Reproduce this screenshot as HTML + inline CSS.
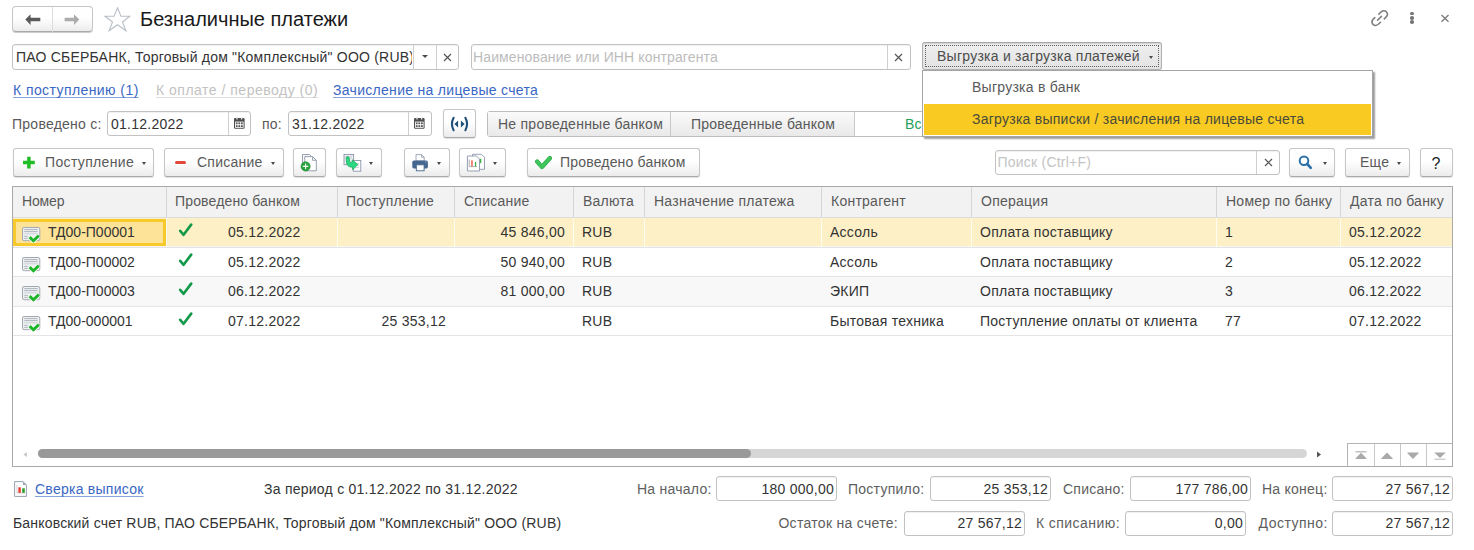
<!DOCTYPE html>
<html><head><meta charset="utf-8">
<style>
*{box-sizing:border-box;margin:0;padding:0}
html,body{width:1474px;height:550px;overflow:hidden;background:#fff}
body{position:relative;font-family:"Liberation Sans",sans-serif;font-size:14px;color:#595959}
.a{position:absolute}
.t{position:absolute;white-space:nowrap;line-height:16px;font-size:14px;letter-spacing:.25px}
.btn{position:absolute;border:1px solid #c6c6c6;border-bottom-color:#a9a9a9;border-radius:3px;background:linear-gradient(#fff 0,#fff 45%,#ececec 100%);box-shadow:0 1px 1px rgba(0,0,0,.12)}
.fld{position:absolute;border:1px solid #c2c2c2;border-radius:3px;background:#fff;box-shadow:inset 0 1px 1px rgba(0,0,0,.06)}

.vsep{position:absolute;top:0;bottom:0;width:1px;background:#cfcfcf}
.arr{position:absolute;width:0;height:0;border-left:2.5px solid transparent;border-right:2.5px solid transparent;border-top:3px solid #4a4a4a}
.lnk{color:#3a66c4;text-decoration:underline;text-decoration-color:#86a4dc;text-decoration-skip-ink:none;text-underline-offset:1.5px;text-decoration-thickness:1.3px}
</style></head><body>

<!-- header -->
<div class="btn" style="left:12px;top:6px;width:81px;height:26px;border-radius:4px;box-shadow:0 1px 0 rgba(0,0,0,.2)"></div>
<div class="a" style="left:52px;top:7px;width:1px;height:25px;background:#dcdcdc"></div>
<svg class="a" style="left:25px;top:14px" width="16" height="12" viewBox="0 0 16 12"><path d="M0.3 5.5 L5.6 0.2 L5.6 3.8 L15.3 3.8 L15.3 7.2 L5.6 7.2 L5.6 10.9 Z" fill="#5a5a5a"/></svg>
<svg class="a" style="left:64px;top:14px" width="16" height="12" viewBox="0 0 16 12"><path d="M15.3 5.5 L10 0.2 L10 3.8 L0.6 3.8 L0.6 7.2 L10 7.2 L10 10.9 Z" fill="#acacac"/></svg>
<svg class="a" style="left:104px;top:7px" width="27" height="25" viewBox="0 0 27 25"><path d="M13.5 0.8 L16.9 9.1 L25.7 9.3 L18.5 15 L21.9 23.8 L13.5 17.8 L5.1 23.8 L8.5 15 L1.1 9.3 L10.1 9.1 Z" fill="none" stroke="#b8bfc7" stroke-width="1.1" stroke-linejoin="miter"/></svg>
<div class="t" style="left:140px;top:8px;font-size:20px;line-height:23px;color:#1a1a1a;letter-spacing:0">Безналичные платежи</div>

<svg class="a" style="left:1370px;top:9px" width="20" height="19" viewBox="0 0 20 19"><g fill="none" stroke="#7e7e7e" stroke-width="1.55" stroke-linecap="round"><path d="M8.9 5.1 L11.2 2.8 Q13.8 0.7 16.3 2.7 Q18.5 5 16.5 7.6 L14.3 9.9"/><path d="M4.8 8.6 L2.7 10.8 Q1 13.3 3 15.4 Q5.3 17.5 8 15.5 L10.5 13.2"/><path d="M7.5 11.2 L11.4 7.4"/></g></svg>
<div class="a" style="left:1410.3px;top:11.8px;width:3.6px;height:3.6px;border-radius:50%;background:#777"></div>
<div class="a" style="left:1410.3px;top:16.1px;width:3.6px;height:3.6px;border-radius:50%;background:#777"></div>
<div class="a" style="left:1410.3px;top:20.4px;width:3.6px;height:3.6px;border-radius:50%;background:#777"></div>
<svg class="a" style="left:1440px;top:14px" width="10" height="9" viewBox="0 0 10 9"><path d="M1.5 1 L8.5 7.8 M8.5 1 L1.5 7.8" stroke="#7a7a7a" stroke-width="1.3"/></svg>

<!-- row 2 -->
<div class="fld" style="left:12px;top:44px;width:447px;height:26px"></div>
<div class="t" style="left:16px;top:49px;color:#333;width:396px;overflow:hidden;letter-spacing:.21px">ПАО СБЕРБАНК, Торговый дом "Комплексный" ООО (RUB)</div>
<div class="a" style="left:413px;top:45px;width:1px;height:24px;background:#cfcfcf"></div>
<div class="a" style="left:436px;top:45px;width:1px;height:24px;background:#cfcfcf"></div>
<div class="arr" style="left:422px;top:55px;border-left-width:3px;border-right-width:3px;border-top-width:3.5px"></div>
<svg class="a" style="left:443px;top:53px" width="9" height="9" viewBox="0 0 9 9"><path d="M1 1 L8 8 M8 1 L1 8" stroke="#555" stroke-width="1.2"/></svg>

<div class="fld" style="left:471px;top:44px;width:440px;height:26px"></div>
<div class="t" style="left:473px;top:49px;color:#bcbcbc;letter-spacing:.12px">Наименование или ИНН контрагента</div>
<div class="a" style="left:887px;top:45px;width:1px;height:24px;background:#cfcfcf"></div>
<svg class="a" style="left:894px;top:53px" width="9" height="9" viewBox="0 0 9 9"><path d="M1 1 L8 8 M8 1 L1 8" stroke="#555" stroke-width="1.2"/></svg>

<div class="a" style="left:922px;top:42px;width:240px;height:28px;border:1px solid #b0b0b0;border-top-color:#a8a8a8;border-radius:3px;background:linear-gradient(#efefef,#e3e3e3);box-shadow:inset 0 1px 1px rgba(0,0,0,.12)"></div>
<div class="a" style="left:925px;top:45px;width:234px;height:22px;border:1px dotted #606060"></div>
<div class="t" style="left:937px;top:48px;color:#4d4d4d">Выгрузка и загрузка платежей</div>
<div class="arr" style="left:1149px;top:56px"></div>

<!-- links -->
<div class="t lnk" style="left:13px;top:82px;letter-spacing:.42px">К поступлению (1)</div>
<div class="t" style="left:156px;top:82px;letter-spacing:.5px;color:#c2c2c2;text-decoration:underline;text-decoration-color:#dcdcdc;text-decoration-skip-ink:none;text-underline-offset:1.5px">К оплате / переводу (0)</div>
<div class="t lnk" style="left:333px;top:82px;letter-spacing:.3px">Зачисление на лицевые счета</div>

<!-- dates row -->
<div class="t" style="left:12px;top:116px">Проведено с:</div>
<div class="fld" style="left:107px;top:111px;width:144px;height:25px"></div>
<div class="t" style="left:111px;top:116px;color:#333">01.12.2022</div>
<div class="a" style="left:228px;top:112px;width:1px;height:23px;background:#cfcfcf"></div>
<svg class="a" style="left:234px;top:117px" width="11" height="12" viewBox="0 0 11 12"><rect x="0" y="1" width="10.6" height="10.8" rx="1.2" fill="#4d4d4d"/><rect x="1" y="4.6" width="8.6" height="6.2" fill="#fff"/><g fill="#555"><rect x="1.8" y="5.4" width="1.8" height="1.8"/><rect x="4.4" y="5.4" width="1.8" height="1.8"/><rect x="7" y="5.4" width="1.8" height="1.8"/><rect x="1.8" y="8.2" width="1.8" height="1.8"/><rect x="4.4" y="8.2" width="1.8" height="1.8"/><rect x="7" y="8.2" width="1.8" height="1.8"/></g><rect x="2.3" y="0" width="1.4" height="2.6" rx="0.6" fill="#e6e6e6"/><rect x="6.9" y="0" width="1.4" height="2.6" rx="0.6" fill="#e6e6e6"/></svg>
<div class="t" style="left:262px;top:116px">по:</div>
<div class="fld" style="left:288px;top:111px;width:144px;height:25px"></div>
<div class="t" style="left:292px;top:116px;color:#333">31.12.2022</div>
<div class="a" style="left:408px;top:112px;width:1px;height:23px;background:#cfcfcf"></div>
<svg class="a" style="left:414px;top:117px" width="11" height="12" viewBox="0 0 11 12"><rect x="0" y="1" width="10.6" height="10.8" rx="1.2" fill="#4d4d4d"/><rect x="1" y="4.6" width="8.6" height="6.2" fill="#fff"/><g fill="#555"><rect x="1.8" y="5.4" width="1.8" height="1.8"/><rect x="4.4" y="5.4" width="1.8" height="1.8"/><rect x="7" y="5.4" width="1.8" height="1.8"/><rect x="1.8" y="8.2" width="1.8" height="1.8"/><rect x="4.4" y="8.2" width="1.8" height="1.8"/><rect x="7" y="8.2" width="1.8" height="1.8"/></g><rect x="2.3" y="0" width="1.4" height="2.6" rx="0.6" fill="#e6e6e6"/><rect x="6.9" y="0" width="1.4" height="2.6" rx="0.6" fill="#e6e6e6"/></svg>
<div class="btn" style="left:443px;top:109px;width:33px;height:29px"></div>
<svg class="a" style="left:449px;top:116px" width="21" height="16" viewBox="0 0 21 16"><g fill="none" stroke="#1d4f7a" stroke-width="2.1" stroke-linecap="round"><path d="M4.6 1.8 Q1.3 8 4.6 14.2"/><path d="M16.4 1.8 Q19.7 8 16.4 14.2"/></g><path d="M5.4 8 L9.1 4.4 L9.1 11.6 Z M15.6 8 L11.9 4.4 L11.9 11.6 Z" fill="#1d4f7a"/></svg>

<div class="a" style="left:487px;top:111px;width:440px;height:26px;border:1px solid #bdbdbd;border-radius:3px;background:#fff"></div>
<div class="a" style="left:488px;top:112px;width:182px;height:24px;background:linear-gradient(#fafafa,#e9e9e9)"></div>
<div class="a" style="left:670px;top:112px;width:1px;height:24px;background:#c8c8c8"></div>
<div class="a" style="left:671px;top:112px;width:183px;height:24px;background:linear-gradient(#fafafa,#e9e9e9)"></div>
<div class="a" style="left:854px;top:112px;width:1px;height:24px;background:#c8c8c8"></div>
<div class="t" style="left:498px;top:116px">Не проведенные банком</div>
<div class="t" style="left:691px;top:116px;letter-spacing:.2px">Проведенные банком</div>
<div class="t" style="left:905px;top:116px;color:#26a05a">Все</div>

<!-- dropdown menu -->
<div class="a" style="left:922px;top:70px;width:451px;height:67px;border:1px solid #a4a4a4;background:#fff;box-shadow:2px 2px 1.5px rgba(0,0,0,.38)"></div>
<div class="a" style="left:924px;top:104px;width:447px;height:31px;background:#f8ca22"></div>
<div class="t" style="left:972px;top:79px">Выгрузка в банк</div>
<div class="t" style="left:972px;top:111px;color:#4a4a3a">Загрузка выписки / зачисления на лицевые счета</div>

<!-- toolbar -->
<div class="btn" style="left:13px;top:148px;width:141px;height:29px"></div>
<svg class="a" style="left:22px;top:156px" width="14" height="14" viewBox="0 0 14 14"><path d="M5.15 0.7 H8.65 V4.85 H12.8 V8.35 H8.65 V12.6 H5.15 V8.35 H1 V4.85 H5.15 Z" fill="#20bd26"/></svg>
<div class="t" style="left:45px;top:154px;letter-spacing:.35px">Поступление</div>
<div class="arr" style="left:142px;top:162px"></div>

<div class="btn" style="left:164px;top:148px;width:120px;height:29px"></div>
<div class="a" style="left:175px;top:161px;width:11px;height:3px;background:#e2473b;border-radius:1.5px"></div>
<div class="t" style="left:197px;top:154px">Списание</div>
<div class="arr" style="left:271px;top:162px"></div>

<div class="btn" style="left:293px;top:148px;width:33px;height:29px"></div>
<svg class="a" style="left:300px;top:153px" width="19" height="19" viewBox="0 0 19 19"><path d="M2.5 1.5 H9.5 L11.5 3.5 V14 H2.5 Z" fill="#fafafa" stroke="#8a96a8" stroke-width="0.9"/><path d="M4.8 3.6 H12.6 L16.3 7.3 V17.8 H4.8 Z" fill="#fff" stroke="#8a96a8" stroke-width="0.9"/><path d="M12.6 3.6 V7.3 H16.3" fill="none" stroke="#8a96a8" stroke-width="0.9"/><circle cx="5.6" cy="13.4" r="4.6" fill="#26a43c" stroke="#1e8a34" stroke-width="0.6"/><path d="M5.6 10.6 V16.2 M2.8 13.4 H8.4" stroke="#fff" stroke-width="1.1"/></svg>

<div class="btn" style="left:336px;top:148px;width:46px;height:29px"></div>
<svg class="a" style="left:342px;top:153px" width="21" height="19" viewBox="0 0 21 19"><rect x="2" y="1.5" width="9.6" height="10.2" fill="#eef0f4" stroke="#8a96a8" stroke-width="0.9"/><path d="M3.5 3.5 H10 M3.5 5.2 H10" stroke="#c9ced8" stroke-width="0.9"/><rect x="11.3" y="7.5" width="7.5" height="10.7" fill="#fff" stroke="#8a96a8" stroke-width="0.9"/><path d="M13 10.5 H17 M13 12.5 H17 M13 14.5 H17" stroke="#c9ced8" stroke-width="0.8"/><path d="M4.2 4.2 Q6.2 2.8 7.2 4.6 L7.6 8.2 Q8 9.4 9.4 9.4 L10.2 9.4 L10.2 6.8 L15.8 11.6 L10.6 16.8 L10.6 14.2 L9.6 14.2 Q5 14 4.4 9 Z" fill="#2bd884" stroke="#1aa552" stroke-width="0.7"/></svg>
<div class="arr" style="left:369px;top:162px"></div>

<div class="btn" style="left:404px;top:148px;width:46px;height:29px"></div>
<svg class="a" style="left:411px;top:154px" width="18" height="18" viewBox="0 0 18 18"><path d="M5 0.6 H10.6 L13.2 3.2 V7 H5 Z" fill="#fff" stroke="#8a96a8" stroke-width="0.8"/><path d="M10.6 0.6 V3.2 H13.2" fill="none" stroke="#8a96a8" stroke-width="0.8"/><rect x="1.3" y="6.6" width="15.6" height="7.8" rx="1.6" fill="#45678f"/><rect x="14" y="7.6" width="1.6" height="0.8" fill="#a9bdd4"/><rect x="5.3" y="10.8" width="7.8" height="6" fill="#fff" stroke="#45678f" stroke-width="0.9"/></svg>
<div class="arr" style="left:437px;top:162px"></div>

<div class="btn" style="left:459px;top:148px;width:47px;height:29px"></div>
<svg class="a" style="left:466px;top:153px" width="20" height="19" viewBox="0 0 20 19"><path d="M6.5 1.3 H15.5 L18.5 4.3 V16.3 H6.5 Z" fill="#fff" stroke="#8a96a8" stroke-width="0.9"/><path d="M1.4 3 H10.5 L13.5 6 V18 H1.4 Z" fill="#fff" stroke="#8a96a8" stroke-width="0.9"/><path d="M3.2 6.5 V13.6 H11" fill="none" stroke="#9a9a9a" stroke-width="0.8"/><rect x="5.3" y="7.3" width="1.3" height="6" fill="#ea4a3a"/><rect x="8.9" y="9" width="1.3" height="4.3" fill="#3cb04a"/><rect x="14" y="5.8" width="1.3" height="4.3" fill="#3cb04a"/></svg>
<div class="arr" style="left:493px;top:162px"></div>

<div class="btn" style="left:527px;top:148px;width:173px;height:29px"></div>
<svg class="a" style="left:535px;top:156px" width="17" height="14" viewBox="0 0 17 14"><path d="M2.2 5.6 L6.9 10.9 L14.8 2.2" fill="none" stroke="#2fa84b" stroke-width="4.4" stroke-linecap="round" stroke-linejoin="round"/><path d="M2.2 5.6 L6.9 10.9 L14.8 2.2" fill="none" stroke="#3dc65b" stroke-width="3.2" stroke-linecap="round" stroke-linejoin="round"/></svg>
<div class="t" style="left:560px;top:154px;letter-spacing:.18px">Проведено банком</div>

<div class="fld" style="left:995px;top:150px;width:285px;height:25px"></div>
<div class="t" style="left:997.5px;top:154px;color:#c4c4c4;letter-spacing:.22px">Поиск (Ctrl+F)</div>
<div class="a" style="left:1256px;top:151px;width:1px;height:23px;background:#cfcfcf"></div>
<svg class="a" style="left:1264px;top:158px" width="9" height="9" viewBox="0 0 9 9"><path d="M1 1 L8 8 M8 1 L1 8" stroke="#555" stroke-width="1.2"/></svg>

<div class="btn" style="left:1289px;top:148px;width:46px;height:29px"></div>
<svg class="a" style="left:1297px;top:154px" width="16" height="16" viewBox="0 0 16 16"><circle cx="7" cy="6.8" r="4.3" fill="none" stroke="#2a70a8" stroke-width="2"/><path d="M10.2 10 L13.8 13.8" stroke="#2a70a8" stroke-width="2.6" stroke-linecap="round"/></svg>
<div class="arr" style="left:1323px;top:162px"></div>

<div class="btn" style="left:1345px;top:148px;width:65px;height:29px"></div>
<div class="t" style="left:1360px;top:154px">Еще</div>
<div class="arr" style="left:1397px;top:162px"></div>

<div class="btn" style="left:1420px;top:148px;width:33px;height:29px"></div>
<div class="t" style="left:1431.5px;top:156px;color:#222;font-size:16px;letter-spacing:0">?</div>

<!-- table -->
<!-- TABLE START -->
<div class="a" style="left:12px;top:186px;width:1441px;height:281px;border:1px solid #a9a9a9;background:#fff"></div>
<div class="a" style="left:13px;top:187px;width:1439px;height:31px;background:#f2f2f2;border-bottom:1px solid #dcdcdc"></div>
<div class="a" style="left:166px;top:187px;width:1px;height:30px;background:#d6d6d6"></div>
<div class="a" style="left:337px;top:187px;width:1px;height:30px;background:#d6d6d6"></div>
<div class="a" style="left:454px;top:187px;width:1px;height:30px;background:#d6d6d6"></div>
<div class="a" style="left:573px;top:187px;width:1px;height:30px;background:#d6d6d6"></div>
<div class="a" style="left:644px;top:187px;width:1px;height:30px;background:#d6d6d6"></div>
<div class="a" style="left:821px;top:187px;width:1px;height:30px;background:#d6d6d6"></div>
<div class="a" style="left:971px;top:187px;width:1px;height:30px;background:#d6d6d6"></div>
<div class="a" style="left:1216px;top:187px;width:1px;height:30px;background:#d6d6d6"></div>
<div class="a" style="left:1340px;top:187px;width:1px;height:30px;background:#d6d6d6"></div>
<div class="t" style="left:22px;top:193px;letter-spacing:-0.15px">Номер</div>
<div class="t" style="left:175px;top:193px;letter-spacing:0.15px">Проведено банком</div>
<div class="t" style="left:346px;top:193px;letter-spacing:0.25px">Поступление</div>
<div class="t" style="left:464px;top:193px;letter-spacing:0.25px">Списание</div>
<div class="t" style="left:583px;top:193px;letter-spacing:0.25px">Валюта</div>
<div class="t" style="left:654px;top:193px;letter-spacing:0.25px">Назначение платежа</div>
<div class="t" style="left:831px;top:193px;letter-spacing:0.25px">Контрагент</div>
<div class="t" style="left:981px;top:193px;letter-spacing:0.25px">Операция</div>
<div class="t" style="left:1226px;top:193px;letter-spacing:0.25px">Номер по банку</div>
<div class="t" style="left:1350px;top:193px;letter-spacing:0.25px">Дата по банку</div>
<div class="a" style="left:13px;top:218px;width:1439px;height:30px;background:#fdf0c6;border-bottom:1px solid #e4e4e4"></div>
<div class="a" style="left:13px;top:246px;width:1439px;height:1px;background:#f7f5ef"></div>
<div class="a" style="left:166px;top:218px;width:1px;height:29px;background:#fffcf0"></div>
<div class="a" style="left:337px;top:218px;width:1px;height:29px;background:#fffcf0"></div>
<div class="a" style="left:454px;top:218px;width:1px;height:29px;background:#fffcf0"></div>
<div class="a" style="left:573px;top:218px;width:1px;height:29px;background:#fffcf0"></div>
<div class="a" style="left:644px;top:218px;width:1px;height:29px;background:#fffcf0"></div>
<div class="a" style="left:821px;top:218px;width:1px;height:29px;background:#fffcf0"></div>
<div class="a" style="left:971px;top:218px;width:1px;height:29px;background:#fffcf0"></div>
<div class="a" style="left:1216px;top:218px;width:1px;height:29px;background:#fffcf0"></div>
<div class="a" style="left:1340px;top:218px;width:1px;height:29px;background:#fffcf0"></div>
<div class="a" style="left:13px;top:219px;width:153px;height:27px;border:3px solid #f7c92b;background:#fde397"></div>
<svg class="a" style="left:22px;top:227px" width="19" height="16" viewBox="0 0 19 16"><rect x="0.5" y="0.5" width="17.3" height="13.2" rx="1.6" fill="#eef0f2" stroke="#a3a8b0"/><path d="M2.2 2.6 H15.6 M2.2 4.6 H15.6" stroke="#a9aeb8" stroke-width="0.9"/><path d="M2.2 6.8 H15.6" stroke="#ccd0d6" stroke-width="0.9"/><path d="M2.2 9.4 H5.8 M2.2 11.4 H5.8" stroke="#a9aeb8" stroke-width="0.9"/><path d="M7.6 10.2 L11.4 13.8 L16.8 8.6" fill="none" stroke="#fff" stroke-width="4.4" stroke-linejoin="round"/><path d="M7.6 10.2 L11.4 13.8 L16.8 8.6" fill="none" stroke="#1fb52b" stroke-width="3"/></svg>
<div class="t" style="left:48px;top:224px;color:#333;letter-spacing:0">ТД00-П00001</div>
<svg class="a" style="left:178px;top:223px" width="16" height="15" viewBox="0 0 16 15"><path d="M2.2 7.8 L5.6 11.8 L13.2 1.6" fill="none" stroke="#13994a" stroke-width="2.6" stroke-linecap="round" stroke-linejoin="round"/></svg>
<div class="t" style="left:228px;top:224px;color:#333">05.12.2022</div>
<div class="t" style="right:909px;top:224px;color:#333">45 846,00</div>
<div class="t" style="left:582px;top:224px;color:#333">RUB</div>
<div class="t" style="left:830px;top:224px;color:#333">Ассоль</div>
<div class="t" style="left:980px;top:224px;color:#333">Оплата поставщику</div>
<div class="t" style="left:1225px;top:224px;color:#333">1</div>
<div class="t" style="left:1349px;top:224px;color:#333">05.12.2022</div>
<div class="a" style="left:13px;top:248px;width:1439px;height:29px;background:#fff;border-bottom:1px solid #e4e4e4"></div>
<svg class="a" style="left:22px;top:257px" width="19" height="16" viewBox="0 0 19 16"><rect x="0.5" y="0.5" width="17.3" height="13.2" rx="1.6" fill="#eef0f2" stroke="#a3a8b0"/><path d="M2.2 2.6 H15.6 M2.2 4.6 H15.6" stroke="#a9aeb8" stroke-width="0.9"/><path d="M2.2 6.8 H15.6" stroke="#ccd0d6" stroke-width="0.9"/><path d="M2.2 9.4 H5.8 M2.2 11.4 H5.8" stroke="#a9aeb8" stroke-width="0.9"/><path d="M7.6 10.2 L11.4 13.8 L16.8 8.6" fill="none" stroke="#fff" stroke-width="4.4" stroke-linejoin="round"/><path d="M7.6 10.2 L11.4 13.8 L16.8 8.6" fill="none" stroke="#1fb52b" stroke-width="3"/></svg>
<div class="t" style="left:48px;top:254px;color:#333;letter-spacing:0">ТД00-П00002</div>
<svg class="a" style="left:178px;top:253px" width="16" height="15" viewBox="0 0 16 15"><path d="M2.2 7.8 L5.6 11.8 L13.2 1.6" fill="none" stroke="#13994a" stroke-width="2.6" stroke-linecap="round" stroke-linejoin="round"/></svg>
<div class="t" style="left:228px;top:254px;color:#333">05.12.2022</div>
<div class="t" style="right:909px;top:254px;color:#333">50 940,00</div>
<div class="t" style="left:582px;top:254px;color:#333">RUB</div>
<div class="t" style="left:830px;top:254px;color:#333">Ассоль</div>
<div class="t" style="left:980px;top:254px;color:#333">Оплата поставщику</div>
<div class="t" style="left:1225px;top:254px;color:#333">2</div>
<div class="t" style="left:1349px;top:254px;color:#333">05.12.2022</div>
<div class="a" style="left:13px;top:277px;width:1439px;height:30px;background:#f8f8f8;border-bottom:1px solid #e4e4e4"></div>
<svg class="a" style="left:22px;top:286px" width="19" height="16" viewBox="0 0 19 16"><rect x="0.5" y="0.5" width="17.3" height="13.2" rx="1.6" fill="#eef0f2" stroke="#a3a8b0"/><path d="M2.2 2.6 H15.6 M2.2 4.6 H15.6" stroke="#a9aeb8" stroke-width="0.9"/><path d="M2.2 6.8 H15.6" stroke="#ccd0d6" stroke-width="0.9"/><path d="M2.2 9.4 H5.8 M2.2 11.4 H5.8" stroke="#a9aeb8" stroke-width="0.9"/><path d="M7.6 10.2 L11.4 13.8 L16.8 8.6" fill="none" stroke="#fff" stroke-width="4.4" stroke-linejoin="round"/><path d="M7.6 10.2 L11.4 13.8 L16.8 8.6" fill="none" stroke="#1fb52b" stroke-width="3"/></svg>
<div class="t" style="left:48px;top:283px;color:#333;letter-spacing:0">ТД00-П00003</div>
<svg class="a" style="left:178px;top:282px" width="16" height="15" viewBox="0 0 16 15"><path d="M2.2 7.8 L5.6 11.8 L13.2 1.6" fill="none" stroke="#13994a" stroke-width="2.6" stroke-linecap="round" stroke-linejoin="round"/></svg>
<div class="t" style="left:228px;top:283px;color:#333">06.12.2022</div>
<div class="t" style="right:909px;top:283px;color:#333">81 000,00</div>
<div class="t" style="left:582px;top:283px;color:#333">RUB</div>
<div class="t" style="left:830px;top:283px;color:#333">ЭКИП</div>
<div class="t" style="left:980px;top:283px;color:#333">Оплата поставщику</div>
<div class="t" style="left:1225px;top:283px;color:#333">3</div>
<div class="t" style="left:1349px;top:283px;color:#333">06.12.2022</div>
<div class="a" style="left:13px;top:307px;width:1439px;height:29px;background:#fff;border-bottom:1px solid #e4e4e4"></div>
<svg class="a" style="left:22px;top:316px" width="19" height="16" viewBox="0 0 19 16"><rect x="0.5" y="0.5" width="17.3" height="13.2" rx="1.6" fill="#eef0f2" stroke="#a3a8b0"/><path d="M2.2 2.6 H15.6 M2.2 4.6 H15.6" stroke="#a9aeb8" stroke-width="0.9"/><path d="M2.2 6.8 H15.6" stroke="#ccd0d6" stroke-width="0.9"/><path d="M2.2 9.4 H5.8 M2.2 11.4 H5.8" stroke="#a9aeb8" stroke-width="0.9"/><path d="M7.6 10.2 L11.4 13.8 L16.8 8.6" fill="none" stroke="#fff" stroke-width="4.4" stroke-linejoin="round"/><path d="M7.6 10.2 L11.4 13.8 L16.8 8.6" fill="none" stroke="#1fb52b" stroke-width="3"/></svg>
<div class="t" style="left:48px;top:313px;color:#333;letter-spacing:0">ТД00-000001</div>
<svg class="a" style="left:178px;top:312px" width="16" height="15" viewBox="0 0 16 15"><path d="M2.2 7.8 L5.6 11.8 L13.2 1.6" fill="none" stroke="#13994a" stroke-width="2.6" stroke-linecap="round" stroke-linejoin="round"/></svg>
<div class="t" style="left:228px;top:313px;color:#333">07.12.2022</div>
<div class="t" style="right:1028px;top:313px;color:#333">25 353,12</div>
<div class="t" style="left:582px;top:313px;color:#333">RUB</div>
<div class="t" style="left:830px;top:313px;color:#333">Бытовая техника</div>
<div class="t" style="left:980px;top:313px;color:#333">Поступление оплаты от клиента</div>
<div class="t" style="left:1225px;top:313px;color:#333">77</div>
<div class="t" style="left:1349px;top:313px;color:#333">07.12.2022</div>
<svg class="a" style="left:22px;top:451px" width="6" height="7" viewBox="0 0 6 7"><path d="M4.9 1.2 L1.4 3.6 L4.9 6 Z" fill="#c4c4c4"/></svg>
<div class="a" style="left:38px;top:449px;width:1269px;height:9px;border-radius:4.5px;background:#d6d6d6"></div>
<div class="a" style="left:38px;top:449px;width:713px;height:9px;border-radius:4.5px;background:#999"></div>
<svg class="a" style="left:1316px;top:451px" width="6" height="7" viewBox="0 0 6 7"><path d="M1 0.5 L5 3.5 L1 6.5 Z" fill="#555"/></svg>
<div class="a" style="left:1347px;top:443px;width:106px;height:24px;border:1px solid #b4b4b4;border-bottom-color:#a9a9a9;border-right-color:#a9a9a9;background:#fff"></div>
<div class="a" style="left:1374px;top:444px;width:1px;height:22px;background:#c8c8c8"></div>
<div class="a" style="left:1400px;top:444px;width:1px;height:22px;background:#c8c8c8"></div>
<div class="a" style="left:1426px;top:444px;width:1px;height:22px;background:#c8c8c8"></div>
<svg class="a" style="left:1355px;top:451px" width="12" height="9" viewBox="0 0 12 9"><path d="M0.5 0.8 H11.5" stroke="#b0b0b0" stroke-width="1.2"/><path d="M6 1.8 L11.6 7.6 Q11.6 8 11 8 H1 Q0.4 8 0.4 7.6 Z" fill="#aaa"/></svg>
<svg class="a" style="left:1381px;top:451px" width="12" height="9" viewBox="0 0 12 9"><path d="M6 1.6 L11.8 7.4 Q11.8 7.9 11.2 7.9 H0.8 Q0.2 7.9 0.2 7.4 Z" fill="#aaa"/></svg>
<svg class="a" style="left:1407px;top:451px" width="12" height="9" viewBox="0 0 12 9"><path d="M0.8 1.6 H11.2 Q11.8 1.6 11.8 2.1 L6 7.9 L0.2 2.1 Q0.2 1.6 0.8 1.6 Z" fill="#aaa"/></svg>
<svg class="a" style="left:1434px;top:451px" width="12" height="9" viewBox="0 0 12 9"><path d="M1 1.4 H11 Q11.6 1.4 11.6 1.8 L6 7 L0.4 1.8 Q0.4 1.4 1 1.4 Z" fill="#aaa"/><path d="M0.5 8.2 H11.5" stroke="#b8b8b8" stroke-width="1"/></svg>
<!-- footer -->
<svg class="a" style="left:14px;top:481px" width="14" height="17" viewBox="0 0 14 17"><path d="M0.6 0.6 H9 L12.4 4 V15.4 H0.6 Z" fill="#fff" stroke="#98a2b0" stroke-width="1"/><path d="M9 0.6 L12.4 4 H9 Z" fill="#98a2b0"/><path d="M3 4 V12 H11" fill="none" stroke="#c4c4c4" stroke-width="0.8"/><rect x="4.4" y="6.3" width="2.4" height="5.5" fill="#e8392a"/><rect x="8.2" y="7.3" width="2.6" height="4.5" fill="#2f9e2a"/></svg>
<div class="t lnk" style="left:35px;top:481px">Сверка выписок</div>
<div class="t" style="left:264px;top:481px;color:#333">За период с 01.12.2022 по 31.12.2022</div>

<div class="t" style="color:#5e5e5e;left:637px;top:481px">На начало:</div>
<div class="fld" style="left:716px;top:476px;width:121px;height:25px"></div>
<div class="t" style="right:640px;top:481px;color:#333">180 000,00</div>
<div class="t" style="color:#5e5e5e;left:848px;top:481px">Поступило:</div>
<div class="fld" style="left:930px;top:476px;width:121px;height:25px"></div>
<div class="t" style="right:426px;top:481px;color:#333">25 353,12</div>
<div class="t" style="color:#5e5e5e;left:1063px;top:481px">Списано:</div>
<div class="fld" style="left:1130px;top:476px;width:121px;height:25px"></div>
<div class="t" style="right:226px;top:481px;color:#333">177 786,00</div>
<div class="t" style="color:#5e5e5e;left:1262px;top:481px">На конец:</div>
<div class="fld" style="left:1332px;top:476px;width:121px;height:25px"></div>
<div class="t" style="right:24px;top:481px;color:#333">27 567,12</div>

<div class="t" style="left:13px;top:515px;color:#333;letter-spacing:.18px">Банковский счет RUB, ПАО СБЕРБАНК, Торговый дом "Комплексный" ООО (RUB)</div>
<div class="t" style="color:#5e5e5e;right:576px;top:515px;letter-spacing:.3px">Остаток на счете:</div>
<div class="fld" style="left:904px;top:511px;width:121px;height:25px"></div>
<div class="t" style="right:452px;top:515px;color:#333">27 567,12</div>
<div class="t" style="color:#5e5e5e;right:354px;top:515px;letter-spacing:.45px">К списанию:</div>
<div class="fld" style="left:1125px;top:511px;width:121px;height:25px"></div>
<div class="t" style="right:231px;top:515px;color:#333">0,00</div>
<div class="t" style="color:#5e5e5e;right:146px;top:515px;letter-spacing:.5px">Доступно:</div>
<div class="fld" style="left:1332px;top:511px;width:121px;height:25px"></div>
<div class="t" style="right:24px;top:515px;color:#333">27 567,12</div>

</body></html>
